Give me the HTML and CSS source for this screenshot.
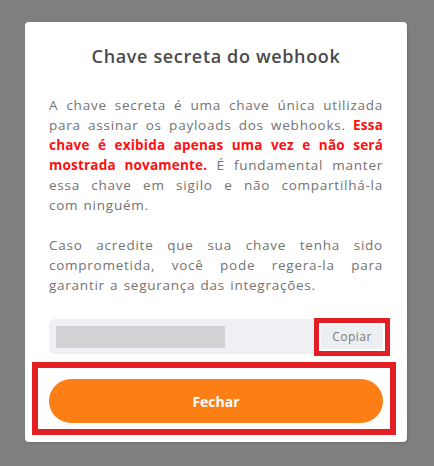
FILE: index.html
```html
<!DOCTYPE html>
<html lang="pt-BR">
<head>
<meta charset="utf-8">
<title>Chave secreta do webhook</title>
<link rel="stylesheet" href="styles.css">
</head>
<body>
<div class="overlay">
  <div class="modal">
    <h2 class="modal-title">Chave secreta do webhook</h2>
    <p class="text">
      <span class="line">A chave secreta é uma chave única utilizada</span>
      <span class="line">para assinar os payloads dos webhooks. <strong class="warn">Essa</strong></span>
      <span class="line"><strong class="warn">chave é exibida apenas uma vez e não será</strong></span>
      <span class="line"><strong class="warn">mostrada novamente.</strong> É fundamental manter</span>
      <span class="line">essa chave em sigilo e não compartilhá-la</span>
      <span class="line last">com ninguém.</span>
    </p>
    <p class="text">
      <span class="line">Caso acredite que sua chave tenha sido</span>
      <span class="line">comprometida, você pode regera-la para</span>
      <span class="line last">garantir a segurança das integrações.</span>
    </p>
    <div class="key-field">
      <span class="key-mask"></span>
      <button class="copy-btn" type="button">Copiar</button>
    </div>
    <div class="highlight">
      <button class="close-btn" type="button">Fechar</button>
    </div>
  </div>
</div>
</body>
</html>
```
FILE: styles.css
```css
html, body {
  margin: 0;
  padding: 0;
}
body {
  background: #7f7f7f;
  font-family: "Open Sans", "Noto Sans", "DejaVu Sans", sans-serif;
  width: 434px;
  height: 466px;
  overflow: hidden;
}
.overlay {
  padding: 22px 0 0 25px;
}
.modal {
  width: 382px;
  box-sizing: border-box;
  background: #ffffff;
  border-radius: 4px;
  padding: 22px 24px 7px 24px;
  box-shadow: 1px 1px 2px rgba(0, 0, 0, 0.15);
}
.modal-title {
  margin: 0;
  text-align: center;
  font-size: 18px;
  line-height: 24px;
  font-weight: 600;
  color: #4a4a4a;
  letter-spacing: 0.65px;
}
.text {
  margin: 27px 0 0 0;
  font-size: 13.5px;
  line-height: 20px;
  color: #737373;
  letter-spacing: 0.75px;
  word-spacing: 1px;
}
.text + .text {
  margin-top: 20px;
}
.line {
  display: block;
  white-space: nowrap;
  text-align: justify;
  text-align-last: justify;
}
.line.last {
  text-align-last: left;
}
.warn {
  color: #ff0f0f;
  font-weight: 700;
  letter-spacing: 0.2px;
}
.key-field {
  margin-top: 24px;
  height: 35px;
  background: #eff0f4;
  border-radius: 6px;
  display: flex;
  align-items: center;
  justify-content: space-between;
  padding-left: 7px;
}
.key-mask {
  width: 169px;
  height: 22px;
  background: #d1d2d4;
}
.copy-btn {
  height: 24px;
  width: 62px;
  border: 0;
  padding: 0;
  background: #eceef2;
  color: #7a7a7a;
  font-family: inherit;
  font-size: 12px;
  letter-spacing: 0.5px;
  box-shadow: 0 0 0 2px #ffffff, 0 0 0 7px #e41e25;
}
.highlight {
  margin-top: 8px;
  margin-left: -17px;
  margin-right: -13px;
  border: 6px solid #e41e25;
  padding: 11px 7px 6px 11px;
}
.close-btn {
  display: block;
  width: 100%;
  height: 44px;
  border: 0;
  border-radius: 22px;
  background: #fd7e14;
  color: #ffffff;
  font-family: inherit;
  font-size: 14px;
  font-weight: 700;
}
```
